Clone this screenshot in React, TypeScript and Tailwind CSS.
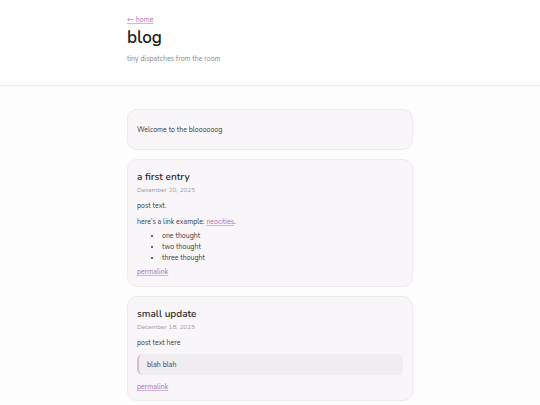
import React from 'react';

const font = { fontFamily: 'Nunito, Lato, "Noto Sans", sans-serif' };

const Link: React.FC<{ children: React.ReactNode }> = ({ children }) => (
    <a href="#" className="text-[#b36cb0] underline decoration-[#d9b3d6] underline-offset-1">
        {children}
    </a>
);

const Card: React.FC<{ children: React.ReactNode; className?: string }> = ({ children, className }) => (
    <div className={`rounded-[10px] border border-[#eeeaee] bg-[#f9f6f9] px-[9px] ${className ?? ''}`}>
        {children}
    </div>
);

const PostHeader: React.FC<{ title: string; date: string }> = ({ title, date }) => (
    <>
        <h2 className="text-[10px] leading-[12px] font-semibold text-[#2a2a2a]">{title}</h2>
        <div className="mt-[2px] text-[6.5px] leading-[9px] text-[#a09da0]">{date}</div>
    </>
);

export default function App() {
    return (
        <div style={font} className="min-h-[405px] bg-[#fdfdfd] text-[#3a3a3a]">
            <header className="border-b border-[#ececec] bg-white">
                <div className="mx-auto w-[286px] pt-[15px] pb-[22px]">
                    <div className="text-[7px] leading-[9px]">
                        <Link>← home</Link>
                    </div>
                    <h1 className="mt-[4px] text-[17px] leading-[20px] font-semibold text-[#222]">blog</h1>
                    <p className="mt-[6px] text-[7px] leading-[9px] text-[#8a888a]">tiny dispatches from the room</p>
                </div>
            </header>

            <main className="mx-auto flex w-[286px] flex-col gap-[9px] pt-[23px] text-[7px] leading-[9px]">
                <Card className="py-[15px]">
                    <p>Welcome to the bloooooog</p>
                </Card>

                <Card className="pt-[11px] pb-[10px]">
                    <PostHeader title="a first entry" date="December 20, 2025" />
                    <p className="mt-[7px]">post text.</p>
                    <p className="mt-[7px]">
                        here's a link example: <Link>neocities</Link>.
                    </p>
                    <ul className="mt-[4px] list-disc pl-[25px]">
                        <li className="leading-[11px]">one thought</li>
                        <li className="leading-[11px]">two thought</li>
                        <li className="leading-[11px]">three thought</li>
                    </ul>
                    <div className="mt-[4px]">
                        <Link>permalink</Link>
                    </div>
                </Card>

                <Card className="pt-[11px] pb-[9px]">
                    <PostHeader title="small update" date="December 18, 2025" />
                    <p className="mt-[7px]">post text here</p>
                    <blockquote className="mt-[7px] rounded-[6px] border-l-2 border-[#dcb8d8] bg-[#f0edf0] px-[8px] py-[6px] text-[#444]">
                        blah blah
                    </blockquote>
                    <div className="mt-[7px]">
                        <Link>permalink</Link>
                    </div>
                </Card>
            </main>
        </div>
    );
}
